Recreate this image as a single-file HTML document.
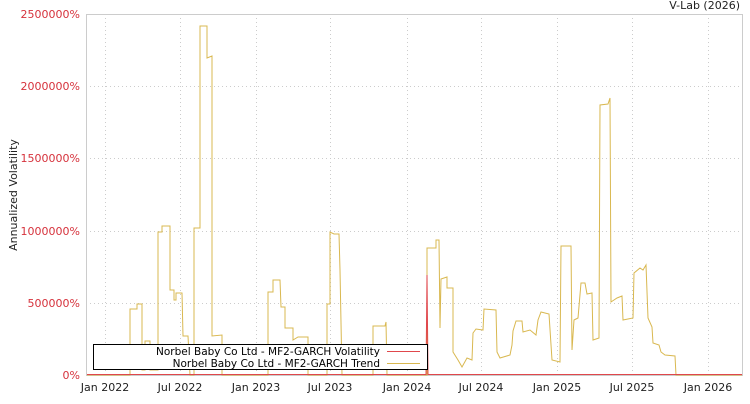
<!DOCTYPE html>
<html><head><style>
body{margin:0;background:#fff;width:750px;height:400px;overflow:hidden;font-family:"DejaVu Sans","Liberation Sans",sans-serif}
</style></head><body>
<svg width="750" height="400" xmlns="http://www.w3.org/2000/svg" font-family="DejaVu Sans, Liberation Sans, sans-serif">
<text x="740" y="9" font-size="11" text-anchor="end" fill="#222">V-Lab (2026)</text>
<rect x="86.5" y="14.5" width="656" height="361" fill="none" stroke="#ccc"/>
<g stroke="#ccc" stroke-dasharray="1,3" fill="none">
<path d="M86 86.5H742M86 158.5H742M86 231.5H742M86 303.5H742"/>
<path d="M105.5 14V375M180.5 14V375M256.5 14V375M330.5 14V375M407.5 14V375M481.5 14V375M557.5 14V375M632.5 14V375M708.5 14V375"/>
</g>
<g font-size="11" fill="#d6323c" text-anchor="end">
<text x="80" y="18">2500000%</text><text x="80" y="90">2000000%</text><text x="80" y="162">1500000%</text><text x="80" y="235">1000000%</text><text x="80" y="307">500000%</text><text x="80" y="379">0%</text>
</g>
<text transform="translate(17,195) rotate(-90)" font-size="11" text-anchor="middle" fill="#222">Annualized Volatility</text>
<g font-size="11" fill="#222" text-anchor="middle">
<text x="105" y="391">Jan 2022</text><text x="180" y="391">Jul 2022</text><text x="256" y="391">Jan 2023</text><text x="330" y="391">Jul 2023</text><text x="407" y="391">Jan 2024</text><text x="481" y="391">Jul 2024</text><text x="557" y="391">Jan 2025</text><text x="632" y="391">Jul 2025</text><text x="708" y="391">Jan 2026</text>
</g>
<polyline fill="none" stroke="#d9b850" stroke-width="1" points="87,375 130,375 130,309 137,309 137,304 142,304 142,370 145,370 145,341 150,341 150,370 158,370 158,232 162,232 162,226 170,226 170,290 174,290 174,300 176,300 176,293 182,293 183,336 188,336 190,375 194,375 194,228 200,228 200,26 207,26 207,58 212,56 212,336 222,335 222,375 268,375 268,292 273,292 273,280 280,280 281,307 285,307 285,328 293,328 293,340 298,337 308,337 308,375 327,375 327,304 330,304 330,232 334,234 339,234 340,270 342,375 373,375 373,326 385,326 386,322 387,375 427,375 427,248 436,248 436,240 439,240 440,328 441,279 447,277 447,288 453,288 453,352 458,360 462,367 467,358 472,360 473,333 476,329 483,330 484,309 496,310 497,352 500,358 510,355 512,345 513,331 516,321 522,321 523,332 530,330 536,335 538,320 541,312 549,314 552,360 560,362 561,246 571,246 572,350 574,320 578,318 581,283 585,283 587,294 592,293 593,340 599,338 600,105 608,104 610,98 611,302 617,298 622,296 623,320 633,318 634,273 640,268 643,270 646,265 648,318 652,327 653,343 659,345 661,352 665,355 675,356 676,375 742,375"/>
<polyline fill="none" stroke="#e0474c" stroke-width="1" points="87,374.5 426,374.5 427,275 428,374.5 742,374.5"/>
<rect x="93.5" y="344.5" width="334" height="25" fill="#fff" stroke="#000"/>
<g font-size="10.5" fill="#000" text-anchor="end">
<text x="380" y="355">Norbel Baby Co Ltd - MF2-GARCH Volatility</text>
<text x="380" y="367">Norbel Baby Co Ltd - MF2-GARCH Trend</text>
</g>
<path d="M387 351.5H420" stroke="#e0474c"/>
<path d="M387 363.5H420" stroke="#d9b850"/>
</svg>
</body></html>
